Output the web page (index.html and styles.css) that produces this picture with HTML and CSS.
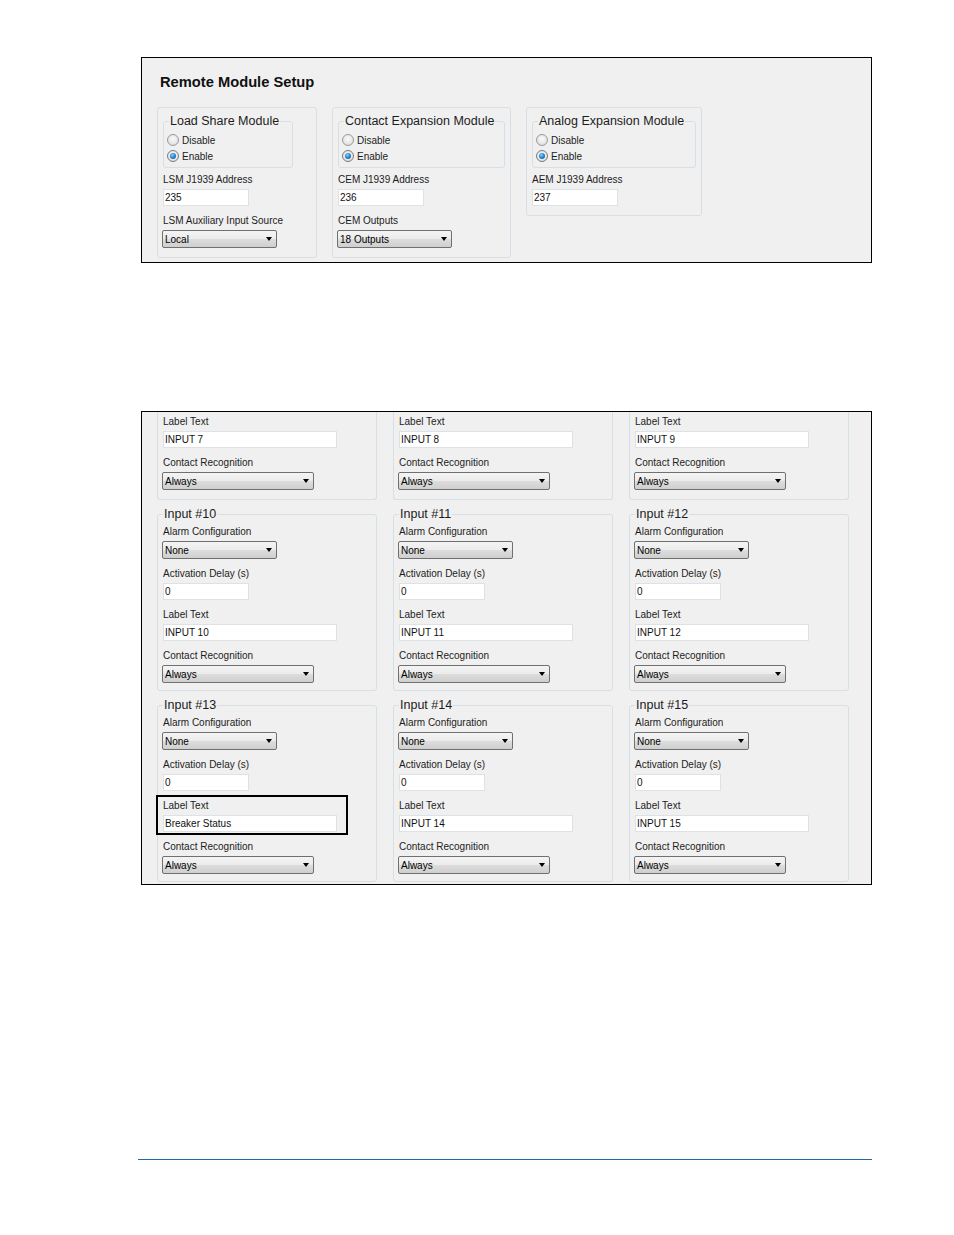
FILE: index.html
```html
<!DOCTYPE html>
<html lang="en">
<head>
  <meta charset="UTF-8">
  <title>Remote Module Setup</title>
  <link rel="stylesheet" href="styles.css">
</head>
<body>
  <div class="page">

    <!-- Remote module setup -->
    <div class="panel setup">
      <h2 class="panel-title">Remote Module Setup</h2>
      <div class="modules">

        <div class="group lsm">
          <fieldset class="mode">
            <legend>Load Share Module</legend>
            <div class="radio"><span class="dot"></span>Disable</div>
            <div class="radio on"><span class="dot"></span>Enable</div>
          </fieldset>
          <div class="field">
            <span class="caption">LSM J1939 Address</span>
            <div class="textbox short">235</div>
          </div>
          <div class="field">
            <span class="caption">LSM Auxiliary Input Source</span>
            <div class="combo short"><span>Local</span><i class="arrow"></i></div>
          </div>
        </div>

        <div class="group cem">
          <fieldset class="mode">
            <legend>Contact Expansion Module</legend>
            <div class="radio"><span class="dot"></span>Disable</div>
            <div class="radio on"><span class="dot"></span>Enable</div>
          </fieldset>
          <div class="field">
            <span class="caption">CEM J1939 Address</span>
            <div class="textbox short">236</div>
          </div>
          <div class="field">
            <span class="caption">CEM Outputs</span>
            <div class="combo short"><span>18 Outputs</span><i class="arrow"></i></div>
          </div>
        </div>

        <div class="group aem">
          <fieldset class="mode">
            <legend>Analog Expansion Module</legend>
            <div class="radio"><span class="dot"></span>Disable</div>
            <div class="radio on"><span class="dot"></span>Enable</div>
          </fieldset>
          <div class="field">
            <span class="caption">AEM J1939 Address</span>
            <div class="textbox short">237</div>
          </div>
        </div>

      </div>
    </div>

    <!-- Contact inputs; the list is scrolled so only the tail of #7-#9 shows -->
    <div class="panel inputs">
      <div class="inputs-grid">

        <fieldset class="input tail">
          <div class="field"><span class="caption">Label Text</span><div class="textbox wide">INPUT 7</div></div>
          <div class="field"><span class="caption">Contact Recognition</span><div class="combo long"><span>Always</span><i class="arrow"></i></div></div>
        </fieldset>
        <fieldset class="input tail">
          <div class="field"><span class="caption">Label Text</span><div class="textbox wide">INPUT 8</div></div>
          <div class="field"><span class="caption">Contact Recognition</span><div class="combo long"><span>Always</span><i class="arrow"></i></div></div>
        </fieldset>
        <fieldset class="input tail">
          <div class="field"><span class="caption">Label Text</span><div class="textbox wide">INPUT 9</div></div>
          <div class="field"><span class="caption">Contact Recognition</span><div class="combo long"><span>Always</span><i class="arrow"></i></div></div>
        </fieldset>

        <fieldset class="input">
          <legend>Input #10</legend>
          <div class="field"><span class="caption">Alarm Configuration</span><div class="combo short"><span>None</span><i class="arrow"></i></div></div>
          <div class="field"><span class="caption">Activation Delay (s)</span><div class="textbox short">0</div></div>
          <div class="field"><span class="caption">Label Text</span><div class="textbox wide">INPUT 10</div></div>
          <div class="field"><span class="caption">Contact Recognition</span><div class="combo long"><span>Always</span><i class="arrow"></i></div></div>
        </fieldset>
        <fieldset class="input">
          <legend>Input #11</legend>
          <div class="field"><span class="caption">Alarm Configuration</span><div class="combo short"><span>None</span><i class="arrow"></i></div></div>
          <div class="field"><span class="caption">Activation Delay (s)</span><div class="textbox short">0</div></div>
          <div class="field"><span class="caption">Label Text</span><div class="textbox wide">INPUT 11</div></div>
          <div class="field"><span class="caption">Contact Recognition</span><div class="combo long"><span>Always</span><i class="arrow"></i></div></div>
        </fieldset>
        <fieldset class="input">
          <legend>Input #12</legend>
          <div class="field"><span class="caption">Alarm Configuration</span><div class="combo short"><span>None</span><i class="arrow"></i></div></div>
          <div class="field"><span class="caption">Activation Delay (s)</span><div class="textbox short">0</div></div>
          <div class="field"><span class="caption">Label Text</span><div class="textbox wide">INPUT 12</div></div>
          <div class="field"><span class="caption">Contact Recognition</span><div class="combo long"><span>Always</span><i class="arrow"></i></div></div>
        </fieldset>

        <fieldset class="input">
          <legend>Input #13</legend>
          <div class="field"><span class="caption">Alarm Configuration</span><div class="combo short"><span>None</span><i class="arrow"></i></div></div>
          <div class="field"><span class="caption">Activation Delay (s)</span><div class="textbox short">0</div></div>
          <div class="field callout"><span class="caption">Label Text</span><div class="textbox wide">Breaker Status</div></div>
          <div class="field"><span class="caption">Contact Recognition</span><div class="combo long"><span>Always</span><i class="arrow"></i></div></div>
        </fieldset>
        <fieldset class="input">
          <legend>Input #14</legend>
          <div class="field"><span class="caption">Alarm Configuration</span><div class="combo short"><span>None</span><i class="arrow"></i></div></div>
          <div class="field"><span class="caption">Activation Delay (s)</span><div class="textbox short">0</div></div>
          <div class="field"><span class="caption">Label Text</span><div class="textbox wide">INPUT 14</div></div>
          <div class="field"><span class="caption">Contact Recognition</span><div class="combo long"><span>Always</span><i class="arrow"></i></div></div>
        </fieldset>
        <fieldset class="input">
          <legend>Input #15</legend>
          <div class="field"><span class="caption">Alarm Configuration</span><div class="combo short"><span>None</span><i class="arrow"></i></div></div>
          <div class="field"><span class="caption">Activation Delay (s)</span><div class="textbox short">0</div></div>
          <div class="field"><span class="caption">Label Text</span><div class="textbox wide">INPUT 15</div></div>
          <div class="field"><span class="caption">Contact Recognition</span><div class="combo long"><span>Always</span><i class="arrow"></i></div></div>
        </fieldset>

      </div>
    </div>

    <div class="footer-rule"></div>
  </div>
</body>
</html>
```

FILE: styles.css
```css
/* Reset */
* {
  margin: 0;
  padding: 0;
  box-sizing: border-box;
}
body {
  background: #fff;
  font-family: "Liberation Sans", Arial, sans-serif;
  color: #1c1c1c;
}
.page {
  width: 734px;
  padding: 57px 0 0 0;
  margin-left: 138px;
}

/* Black-framed dialog panels */
.panel {
  width: 731px;
  margin-left: 3px;
  border: 1px solid #000;
  background: #f0f0f0;
}
.setup {
  padding: 15px 15px 4px;
}
.panel-title {
  font-size: 14.7px;
  line-height: 18px;
  font-weight: bold;
  color: #111;
  margin-left: 3px;
  margin-bottom: 16px;
}
.modules {
  display: flex;
  align-items: flex-start;
  gap: 15px;
}

/* Rounded group boxes */
.group {
  border: 1px solid #d5dfe5;
  border-radius: 3px;
  padding: 6px 5px 9px;
}
.lsm { width: 160px; }
.cem { width: 179px; }
.aem { width: 176px; }
.lsm .mode { width: 130px; }

fieldset {
  border: 1px solid #d5dfe5;
  border-radius: 3px;
  min-width: 0;
}
legend {
  font-size: 12.5px;
  line-height: 15px;
  padding: 0 1px;
  color: #1c1c1c;
}
.mode {
  padding: 3px 3px 3px;
}
.mode legend {
  margin-left: 2px;
}

/* Radio buttons */
.radio {
  display: flex;
  align-items: center;
  gap: 3px;
  height: 16px;
  font-size: 10px;
}
.dot {
  width: 12px;
  height: 12px;
  border-radius: 50%;
  border: 1px solid #9a9a9a;
  background: radial-gradient(circle at 50% 40%, #fafafa 0%, #e6e6e6 60%, #d2d2d2 100%);
  display: flex;
  align-items: center;
  justify-content: center;
}
.radio.on .dot {
  border-color: #7b7b7b;
}
.radio.on .dot::before {
  content: "";
  width: 6px;
  height: 6px;
  border-radius: 50%;
  background: radial-gradient(circle at 40% 35%, #8fd0f5 0%, #2a8ad4 45%, #124f8c 100%);
}

/* Caption + control */
.field {
  margin-top: 8px;
}
.mode + .field {
  margin-top: 5px;
}
.caption {
  display: block;
  font-size: 10px;
  line-height: 13px;
  margin-bottom: 3px;
  color: #1c1c1c;
}
.textbox {
  height: 17px;
  background: #fff;
  border: 1px solid #dde2e7;
  font-size: 10px;
  line-height: 15px;
  padding-left: 1px;
  color: #111;
}
.combo {
  height: 18px;
  margin-left: -1px;
  border: 1px solid #707070;
  border-radius: 2px;
  background: linear-gradient(#f4f4f4 0%, #ebebeb 50%, #dddddd 51%, #cfcfcf 100%);
  display: flex;
  align-items: center;
  justify-content: space-between;
  padding: 0 4px 0 2px;
  font-size: 10px;
  color: #000;
}
.arrow {
  width: 0;
  height: 0;
  border-left: 3.5px solid transparent;
  border-right: 3.5px solid transparent;
  border-top: 4px solid #000;
}
.textbox.short { width: 86px; }
.textbox.wide { width: 174px; }
.combo.short { width: 115px; }
.combo.long { width: 152px; }

/* Input list (scrolled) */
.inputs {
  margin-top: 148px;
  padding: 0 0 2px 15px;
}
.inputs-grid {
  display: grid;
  grid-template-columns: repeat(3, 220px);
  column-gap: 16px;
  row-gap: 7px;
}
.input {
  padding: 3px 5px 7px;
}
.input .field:first-of-type {
  margin-top: 0;
}
/* bottom part of a box whose top is scrolled out of view */
.input.tail {
  border-top: 0;
  border-radius: 0 0 3px 3px;
  padding: 3px 5px 9px;
}

/* Highlight frame round one field */
.callout {
  position: relative;
}
.callout::after {
  content: "";
  position: absolute;
  left: -7px;
  top: -4px;
  bottom: -3px;
  width: 188px;
  border: 2px solid #000;
}

.footer-rule {
  height: 1px;
  background: #2268a8;
  margin-top: 274px;
}
```
